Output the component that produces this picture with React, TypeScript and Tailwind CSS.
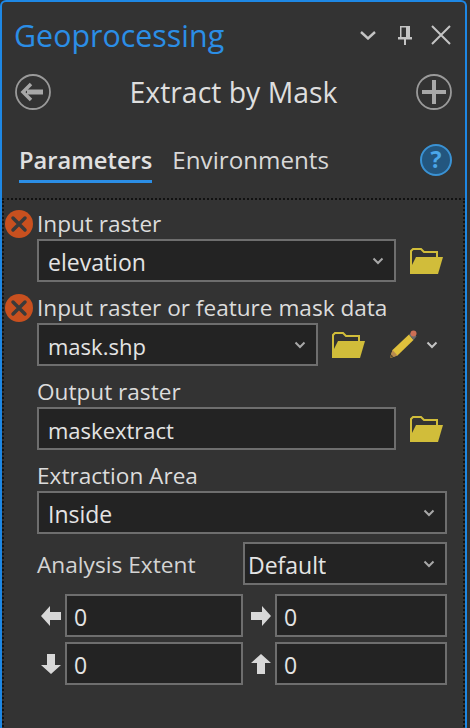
const Chevron = ({ className = "" }: { className?: string }) => (
    <svg width="12" height="8" viewBox="0 0 12 8" className={className}>
        <path d="M1.5 1.5 L6 6 L10.5 1.5" fill="none" stroke="currentColor" strokeWidth="2" />
    </svg>
);

const Folder = () => (
    <svg width="33" height="26" viewBox="0 0 33 26" className="shrink-0">
        <path d="M1 25 V3 L3 1 H11 L14 4 H27 V9" fill="none" stroke="#d1bd3a" strokeWidth="2" />
        <path d="M0 26 V21 L6 9 H33 L28 26 Z" fill="#d1bd3a" />
    </svg>
);

const Pencil = () => (
    <svg width="28" height="28" viewBox="0 0 28 28" className="shrink-0">
        <path d="M1 28 L3.5 20 L20 4.5 L24.5 10 L8.5 25.5 Z" fill="#dfc03c" />
        <path d="M1 28 L3.5 20 L8.5 25.5 Z" fill="#b98a4e" />
        <path d="M1 28 L2 24.5 L4.5 26.5 Z" fill="#5a4a30" />
        <path d="M20 4.5 L23 2 L27.5 6.5 L24.5 10 Z" fill="#6b6b6b" />
        <circle cx="24.5" cy="3.5" r="3" fill="#cd6f55" />
    </svg>
);

const ErrorIcon = () => (
    <svg width="28" height="28" viewBox="0 0 28 28">
        <circle cx="14" cy="14" r="14" fill="#c8501f" />
        <path d="M8 8 L20 20 M20 8 L8 20" stroke="#3a3a3a" strokeWidth="3.5" strokeLinecap="round" />
    </svg>
);

const Box = ({ text, arrow, className = "", textClass = "text-[23px]" }: { text: string; arrow?: boolean; className?: string; textClass?: string }) => (
    <div className={`flex h-[43px] items-center justify-between border-2 border-[#6e6e6e] bg-[#232323] pr-[10px] text-[#e4e4e4] ${textClass} ${className}`}>
        <span className="truncate pt-[3px]">{text}</span>
        {arrow && <Chevron className="shrink-0 text-[#a8a8a8]" />}
    </div>
);

const Label = ({ text, error }: { text: string; error?: boolean }) => (
    <div className="relative flex h-[30px] items-center pt-[2px] text-[22.6px] text-[#dcdcdc]">
        {error && (
            <div className="absolute -left-[32px] top-[2px]">
                <ErrorIcon />
            </div>
        )}
        {text}
    </div>
);

const ArrowIcon = ({ rotate }: { rotate: string }) => (
    <svg width="20" height="20" viewBox="0 0 20 20" className={`shrink-0 ${rotate}`}>
        <path d="M0 10 L9 0 V6 H20 V14 H9 V20 Z" fill="#d8d8d8" />
    </svg>
);

const App = () => {
    return (
        <div className="h-[728px] w-[470px] overflow-hidden bg-[#2f2f2f] font-['Open_Sans','Noto_Sans',sans-serif]">
            <div className="h-[740px] w-[467px] rounded-t-md border-x-2 border-t-2 border-[#1e88e5] bg-[#333333]">
                <div className="flex h-[66px] items-center justify-between pl-3 pr-[14px]">
                    <span className="pt-[2px] text-[30.4px] text-[#2b8ee6]">Geoprocessing</span>
                    <div className="flex items-center text-[#c4c4c4]">
                        <svg width="16" height="9" viewBox="0 0 16 9" className="mr-[21px]">
                            <path d="M1 1 L8 7.5 L15 1" fill="none" stroke="currentColor" strokeWidth="2.4" />
                        </svg>
                        <svg width="16" height="20" viewBox="0 0 16 20" className="mr-[18px]">
                            <path d="M3 1 H13 V12 H3 Z M1 12 H15 V14.5 H1 Z M7 14 H9 V20 H7 Z" fill="currentColor" />
                            <path d="M4.5 2.5 H9 V12 H4.5 Z" fill="#333333" />
                        </svg>
                        <svg width="20" height="20" viewBox="0 0 20 20">
                            <path d="M1 1 L19 19 M19 1 L1 19" stroke="currentColor" strokeWidth="2" />
                        </svg>
                    </div>
                </div>
                <div className="flex h-[48px] items-center justify-between pl-[13px] pr-[13px]">
                    <svg width="36" height="36" viewBox="0 0 36 36">
                        <circle cx="18" cy="18" r="17" fill="none" stroke="#9a9a9a" strokeWidth="1.8" />
                        <path d="M12 18 H28" stroke="#a8a8a8" strokeWidth="5" />
                        <path d="M16 10 L8 18 L16 26" fill="none" stroke="#a8a8a8" strokeWidth="3.5" />
                    </svg>
                    <span className="text-[28.4px] text-[#dedede]">Extract by Mask</span>
                    <svg width="36" height="36" viewBox="0 0 36 36">
                        <circle cx="18" cy="18" r="17" fill="none" stroke="#9a9a9a" strokeWidth="1.8" />
                        <path d="M18 6 V30 M6 18 H30" stroke="#a8a8a8" strokeWidth="4" />
                    </svg>
                </div>
                <div className="mt-[23px] flex h-[59px] items-start pl-[17px] pr-[13px]">
                    <div className="flex flex-col">
                        <span className="h-[41px] text-[23.7px] font-semibold leading-[42px] text-[#e0e0e0]">Parameters</span>
                        <div className="h-[3px] bg-[#2b8ee6]" />
                    </div>
                    <span className="ml-[20px] h-[41px] text-[24.2px] leading-[42px] text-[#d8d8d8]">Environments</span>
                    <svg width="32" height="32" viewBox="0 0 32 32" className="ml-auto mt-[5px]">
                        <circle cx="16" cy="16" r="15" fill="#23567f" stroke="#3a92d4" strokeWidth="2" />
                        <text x="16" y="24" textAnchor="middle" fontSize="23" fontWeight="700" fill="#4ba6ea" fontFamily="Open Sans">?</text>
                    </svg>
                </div>
                <div className="h-[532px] border-x-2 border-t-2 border-dotted border-[#111111] pl-[33px] pr-[16px] pt-[8px]">
                    <Label text="Input raster" error />
                    <div className="mt-[1px] flex items-center gap-[14px]">
                        <Box text="elevation" arrow className="w-[359px] pl-[9px]" />
                        <Folder />
                    </div>
                    <div className="mt-[10px]">
                        <Label text="Input raster or feature mask data" error />
                    </div>
                    <div className="mt-[1px] flex items-center">
                        <Box text="mask.shp" arrow textClass="text-[22px]" className="w-[281px] pl-[9px]" />
                        <div className="ml-[14px]">
                            <Folder />
                        </div>
                        <div className="mb-[2px] ml-[24px]">
                            <Pencil />
                        </div>
                        <Chevron className="ml-[9px] text-[#c4c4c4]" />
                    </div>
                    <div className="mt-[10px]">
                        <Label text="Output raster" />
                    </div>
                    <div className="mt-[1px] flex items-center gap-[14px]">
                        <Box text="maskextract" textClass="text-[22px]" className="w-[359px] pl-[9px]" />
                        <Folder />
                    </div>
                    <div className="mt-[10px]">
                        <Label text="Extraction Area" />
                    </div>
                    <Box text="Inside" arrow className="mt-[1px] w-[410px] pl-[9px]" />
                    <div className="mt-[8px] flex w-[410px] items-center justify-between">
                        <span className="pt-[4px] text-[22.7px] text-[#d4d4d4]">Analysis Extent</span>
                        <Box text="Default" arrow className="w-[204px] pl-[3px]" />
                    </div>
                    <div className="mt-[9px] grid w-[410px] grid-cols-[206px_204px] gap-y-[5px]">
                        <div className="flex items-center">
                            <div className="flex w-[28px] justify-start pl-[4px]"><ArrowIcon rotate="" /></div>
                            <Box text="0" className="w-[178px] pl-[7px]" />
                        </div>
                        <div className="flex items-center justify-end">
                            <ArrowIcon rotate="mr-[4px] rotate-180" />
                            <Box text="0" className="w-[172px] pl-[7px]" />
                        </div>
                        <div className="flex items-center">
                            <div className="flex w-[28px] justify-start pl-[4px]"><ArrowIcon rotate="-rotate-90" /></div>
                            <Box text="0" className="w-[178px] pl-[7px]" />
                        </div>
                        <div className="flex items-center justify-end">
                            <ArrowIcon rotate="mr-[4px] rotate-90" />
                            <Box text="0" className="w-[172px] pl-[7px]" />
                        </div>
                    </div>
                </div>
            </div>
        </div>
    );
};

export default App;
